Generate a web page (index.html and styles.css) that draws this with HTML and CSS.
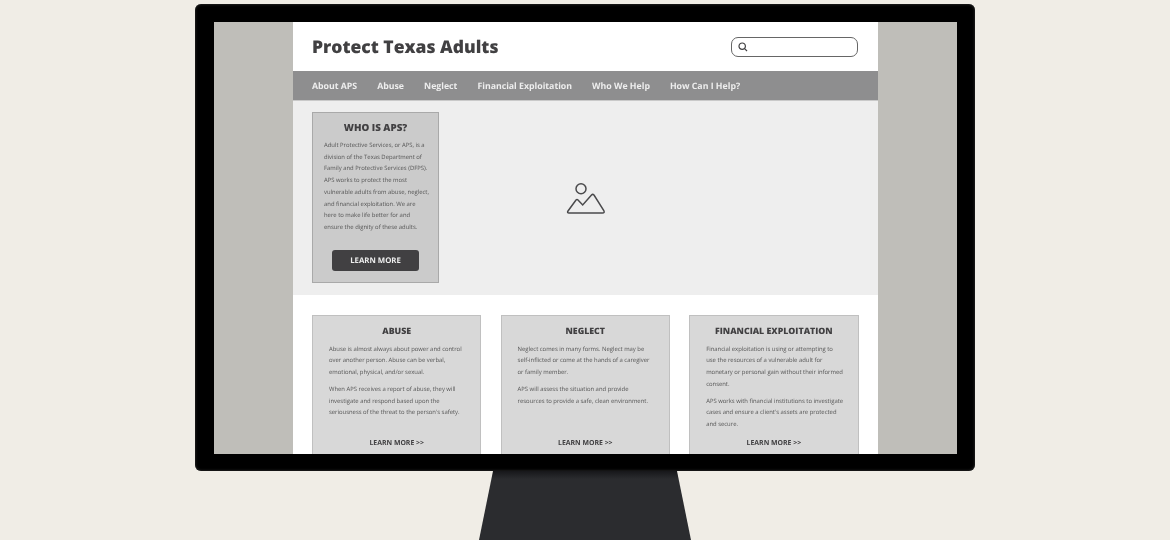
FILE: index.html
```html
<!DOCTYPE html>
<html lang="en">
<head>
    <meta charset="UTF-8">
    <meta name="viewport" content="width=device-width, initial-scale=1.0">
    <title>Protect Texas Adults</title>
    <link rel="stylesheet" href="styles.css">
</head>
<body>
    <div class="stage">
        <div class="monitor">
            <div class="screen">
                <div class="side"></div>
                <div class="site">
                    <div class="header">
                        <h1>Protect Texas Adults</h1>
                        <div class="search">
                            <svg class="search-icon" viewBox="0 0 10 10" width="10" height="10">
                                <circle cx="4.2" cy="4.2" r="3.2"></circle>
                                <path d="M6.6 6.6 L9 9"></path>
                            </svg>
                        </div>
                    </div>

                    <div class="nav">
                        <a>About APS</a>
                        <a>Abuse</a>
                        <a>Neglect</a>
                        <a>Financial Exploitation</a>
                        <a>Who We Help</a>
                        <a>How Can I Help?</a>
                    </div>

                    <div class="hero">
                        <div class="intro">
                            <h2>WHO IS APS?</h2>
                            <p>Adult Protective Services, or APS, is a<br>division of the Texas Department of<br>Family and Protective Services (DFPS).<br>APS works to protect the most<br>vulnerable adults from abuse, neglect,<br>and financial exploitation. We are<br>here to make life better for and<br>ensure the dignity of these adults.</p>
                            <a class="btn">LEARN MORE</a>
                        </div>
                        <div class="hero-image">
                            <svg viewBox="0 0 40 33" width="40" height="33">
                                <circle cx="15" cy="6.7" r="5"></circle>
                                <path d="M2 29 L10 18 Q11 17 12 18 L16.7 23 L25.5 13 Q26.7 11.8 28 13 L37.8 28.5 Q39 31 36.5 31 L3 31 Q0.8 31 2 29 Z"></path>
                            </svg>
                        </div>
                    </div>

                    <div class="cards">
                        <div class="card">
                            <h3>ABUSE</h3>
                            <p>Abuse is almost always about power and control<br>over another person. Abuse can be verbal,<br>emotional, physical, and/or sexual.</p>
                            <p>When APS receives a report of abuse, they will<br>investigate and respond based upon the<br>seriousness of the threat to the person's safety.</p>
                            <a class="more">LEARN MORE &gt;&gt;</a>
                        </div>
                        <div class="card">
                            <h3>NEGLECT</h3>
                            <p>Neglect comes in many forms. Neglect may be<br>self-inflicted or come at the hands of a caregiver<br>or family member.</p>
                            <p>APS will assess the situation and provide<br>resources to provide a safe, clean environment.</p>
                            <a class="more">LEARN MORE &gt;&gt;</a>
                        </div>
                        <div class="card">
                            <h3>FINANCIAL EXPLOITATION</h3>
                            <p>Financial exploitation is using or attempting to<br>use the resources of a vulnerable adult for<br>monetary or personal gain without their informed<br>consent.</p>
                            <p>APS works with financial institutions to investigate<br>cases and ensure a client's assets are protected<br>and secure.</p>
                            <a class="more">LEARN MORE &gt;&gt;</a>
                        </div>
                    </div>
                </div>
                <div class="side"></div>
            </div>
        </div>
        <div class="stand"></div>
    </div>
</body>
</html>
```

FILE: styles.css
```css
* {
    margin: 0;
    padding: 0;
    box-sizing: border-box;
}

body {
    font-family: 'Open Sans', 'Liberation Sans', sans-serif;
    text-rendering: geometricPrecision;
    background: #f0ede6;
    height: 540px;
    overflow: hidden;
}

.stage {
    display: flex;
    flex-direction: column;
    align-items: center;
    padding-top: 4px;
}

.monitor {
    width: 780px;
    height: 467px;
    padding: 18px 18px 17px 19px;
    background: #000;
    border-radius: 6px;
    box-shadow: inset 0 0 3px #3a3a3a;
}

.screen {
    display: flex;
    height: 432px;
}

.side {
    flex: 1;
    background: #bfbeb9;
}

/* the reference is a scaled-down mockup, so everything in it is a bit soft */
.site {
    width: 585px;
    overflow: hidden;
    background: #fff;
    filter: blur(0.3px);
}

.header {
    height: 49px;
    padding: 0 20px 0 19px;
    display: flex;
    align-items: center;
    justify-content: space-between;
}

.header h1 {
    font-size: 17.5px;
    font-weight: 800;
    color: #414042;
}

.search {
    width: 127px;
    height: 20px;
    margin-top: 1px;
    border: 1px solid #666;
    border-radius: 7px;
    display: flex;
    align-items: center;
    padding-left: 6px;
}

.search-icon {
    fill: none;
    stroke: #414042;
    stroke-width: 1.2;
}

.nav {
    height: 30px;
    padding-left: 19px;
    display: flex;
    align-items: center;
    gap: 20px;
    background: #8e8e8f;
    border-bottom: 1px solid #c9c9c9;
}

.nav a {
    font-size: 8.75px;
    font-weight: 700;
    color: #eee;
}

.hero {
    height: 194px;
    padding: 11px 19px;
    display: flex;
    background: #eee;
}

.intro {
    width: 127px;
    height: 171px;
    padding-top: 8px;
    display: flex;
    flex-direction: column;
    background: #cbcbcb;
    border: 1px solid #a9a9a9;
}

.intro h2 {
    font-size: 9.8px;
    font-weight: 800;
    color: #414042;
    text-align: center;
    line-height: 14px;
    margin-bottom: 5px;
}

.intro p {
    font-size: 5.9px;
    line-height: 11.7px;
    color: #555;
    padding-left: 11px;
    white-space: nowrap;
}

.btn {
    width: 87px;
    height: 21px;
    margin: auto 0 11px 19px;
    display: flex;
    align-items: center;
    justify-content: center;
    font-size: 7.8px;
    font-weight: 700;
    color: #eee;
    background: #414042;
    border-radius: 3px;
}

.hero-image {
    flex: 1;
    display: flex;
    align-items: center;
    justify-content: center;
    padding-right: 127px;
}

.hero-image svg {
    fill: none;
    stroke: #4a4a4c;
    stroke-width: 1.5;
}

.cards {
    padding: 20px 0 0 19px;
    display: grid;
    grid-template-columns: repeat(3, 169.4px);
    column-gap: 19.2px;
}

.card {
    height: 150px;
    padding: 8px 16px 0;
    display: flex;
    flex-direction: column;
    background: #d8d8d8;
    border: 1px solid #c0c0c0;
}

.card h3 {
    font-size: 8.8px;
    font-weight: 800;
    color: #414042;
    text-align: center;
    line-height: 14px;
    margin-bottom: 5.5px;
}

.card p {
    font-size: 5.9px;
    line-height: 11.7px;
    color: #555;
    white-space: nowrap;
    margin-bottom: 5.3px;
}

.more {
    margin-top: auto;
    margin-bottom: 15px;
    font-size: 6.9px;
    font-weight: 700;
    color: #414042;
    text-align: center;
    line-height: 10px;
}

.stand {
    width: 212px;
    height: 69px;
    background: linear-gradient(#17171a, #2b2c2f 8px);
    clip-path: polygon(14px 0, 198px 0, 212px 100%, 0 100%);
}
```
